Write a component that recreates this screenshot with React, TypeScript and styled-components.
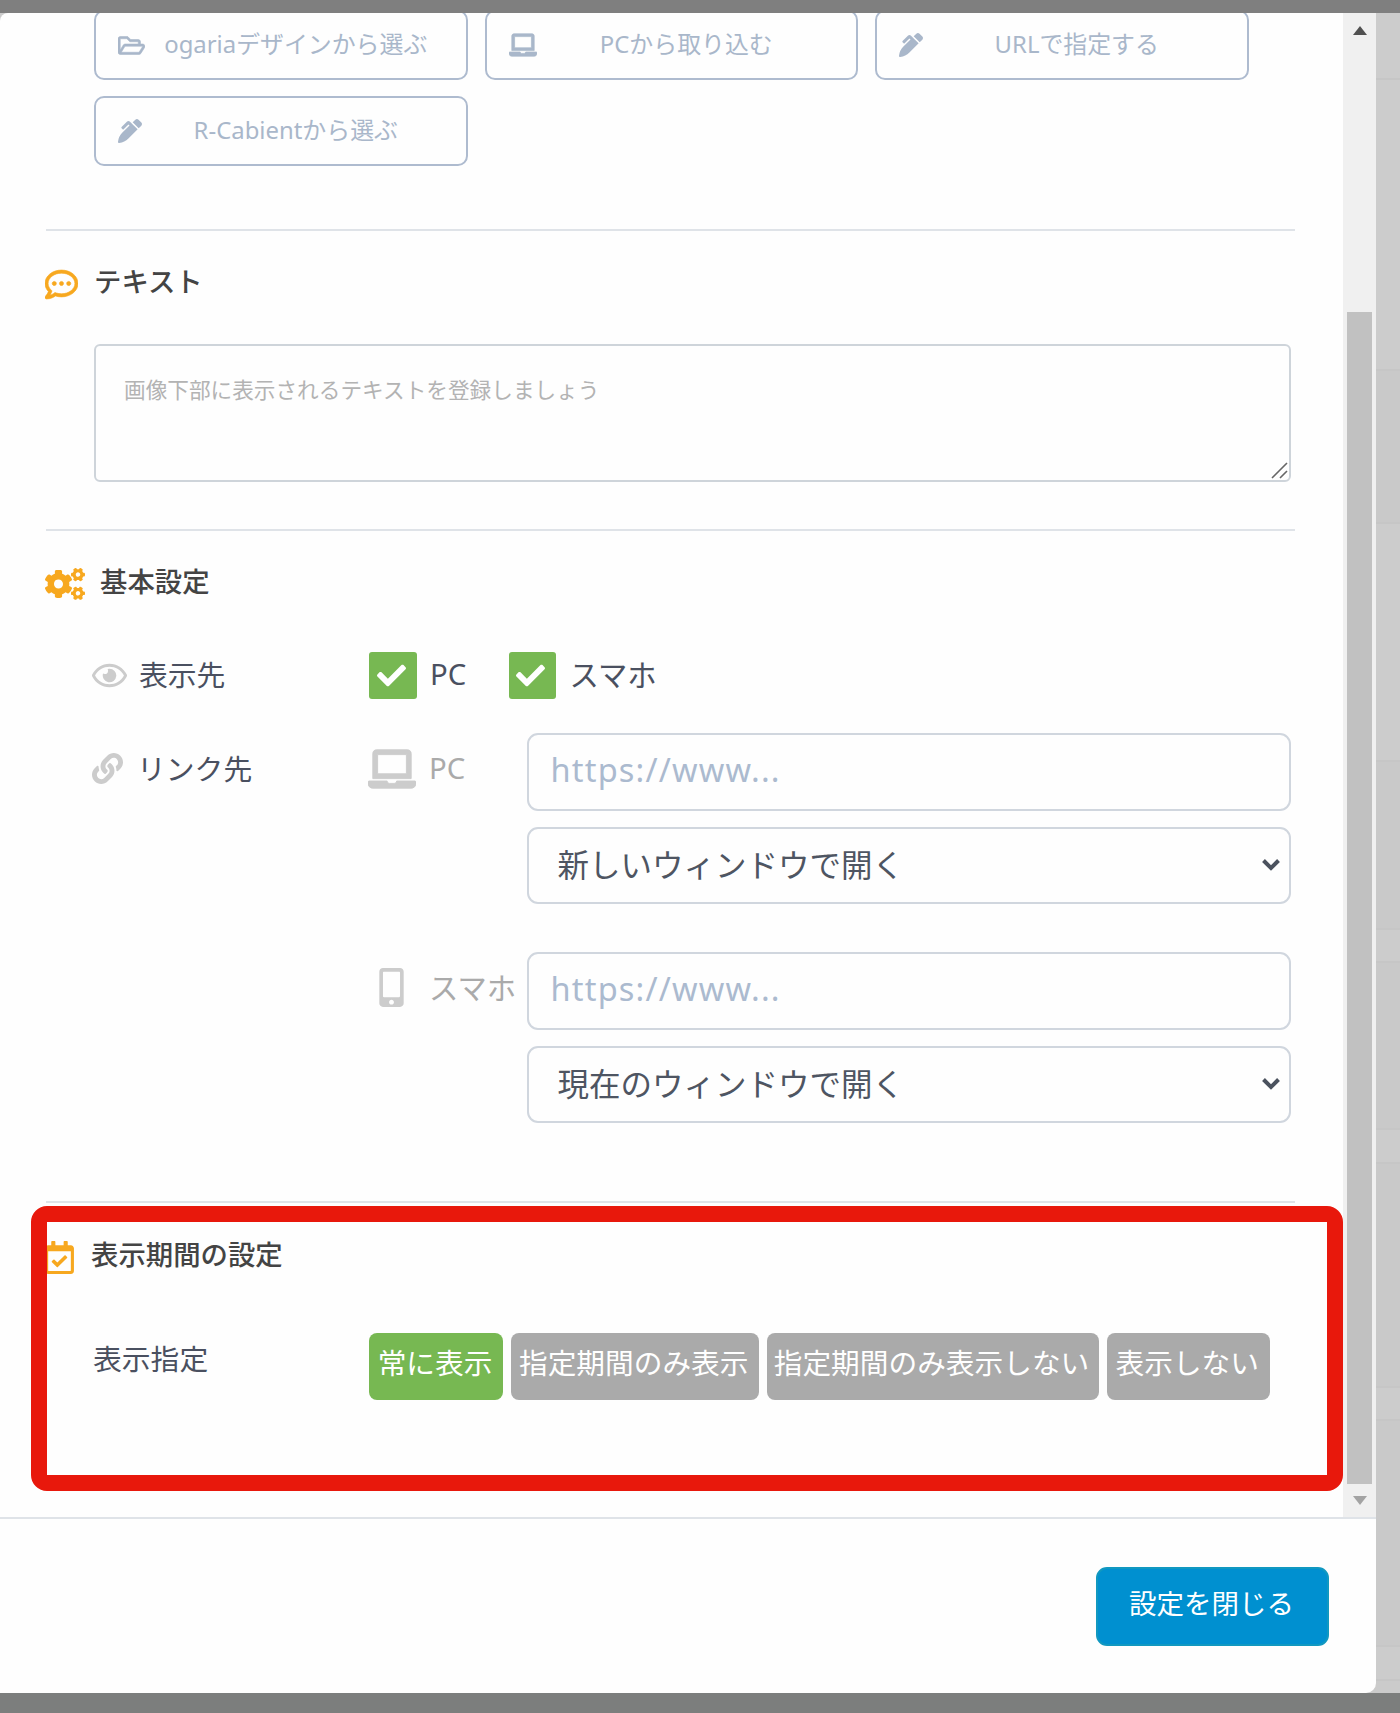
import React from 'react';
import styled, { createGlobalStyle } from 'styled-components';
import {
  FaRegFolderOpen, FaLaptop, FaPenAlt, FaRegCommentDots, FaCogs, FaRegEye, FaLink,
  FaMobileAlt, FaRegCalendarCheck, FaCheck,
} from 'react-icons/fa';

const Global = createGlobalStyle`
  * { box-sizing: border-box; }
  body { margin: 0; background: #cbcbcb; font-family: "Noto Sans", "Noto Sans CJK JP", sans-serif; color: #4a5060; }
  button, input, textarea, select { font-family: inherit; margin: 0; }
`;

const Page = styled.div`
  display: grid;
  grid-template-columns: 1376px 24px;
  grid-template-rows: 13px 1679.5px 20.5px;
  width: 1400px;
  height: 1713px;
  overflow: hidden;
`;
const Band = styled.div<{ $color: string }>`
  grid-column: 1 / -1;
  background: ${p => p.$color};
`;
const Backdrop = styled.div`
  background: #cbcbcb;
`;
const Strip = styled.div<{ $h: number; $alt?: boolean }>`
  height: ${p => p.$h}px;
  border-bottom: 2px solid #c6c6c6;
  background: ${p => (p.$alt ? '#c9c9c9' : '#cccccc')};
`;
const Modal = styled.div`
  display: flex;
  flex-direction: column;
  background: #fefefe;
  border-radius: 8px 0 10px 0;
  overflow: hidden;
`;
const Scroller = styled.div`
  display: flex;
  height: 1504px;
`;
const Content = styled.div`
  position: relative;
  width: 1343px;
  overflow: hidden;
`;
const Track = styled.div`
  width: 33px;
  background: #f0f0f0;
  display: flex;
  flex-direction: column;
  align-items: center;
`;
const ArrowUp = styled.div`
  margin-top: 13px;
  border: 7px solid transparent;
  border-top: 0;
  border-bottom: 9px solid #505050;
`;
const Thumb = styled.div`
  margin-top: 277px;
  width: 25px;
  height: 1172px;
  background: #c1c1c1;
`;
const ArrowDown = styled.div`
  margin-top: 12px;
  border: 7px solid transparent;
  border-bottom: 0;
  border-top: 9px solid #a3a3a3;
`;
const Sources = styled.div`
  display: grid;
  grid-template-columns: repeat(3, 373.5px);
  grid-auto-rows: 70px;
  gap: 16px 17px;
  margin: -3px 0 0 94px;
  height: 219px;
  align-content: start;
`;
const SourceButton = styled.button`
  display: flex;
  align-items: center;
  background: transparent;
  border: 2px solid #aebbcf;
  border-radius: 10px;
  padding: 0 22px;
  font-size: 23.9px;
  color: #a9b7ca;
  white-space: nowrap;
`;
const SourceIcon = styled.span<{ $size: number }>`
  display: flex;
  width: 32px;
  font-size: ${p => p.$size}px;
`;
const SourceLabel = styled.span`
  flex: 1;
  text-align: center;
  padding: 0 2px 6px 0;
`;
const Section = styled.section<{ $h: number }>`
  height: ${p => p.$h}px;
  margin-left: 46px;
  width: 1249px;
  border-top: 2px solid #dfe3e8;
`;
const Heading = styled.h2<{ $gap: number; $top: number; $left?: number }>`
  display: flex;
  align-items: center;
  gap: ${p => p.$gap}px;
  height: 40px;
  margin: ${p => p.$top}px 0 0 ${p => p.$left ?? 0}px;
  font-size: 27.4px;
  font-weight: 500;
  line-height: 40px;
  color: #444;
`;
const HeadingText = styled.span`
  padding-bottom: 4px;
  line-height: 36px;
  font-family: "Noto Sans CJK JP", sans-serif;
`;
const HeadingIcon = styled.span`
  display: flex;
  padding-top: 4px;
  color: #f7a81f;
`;
const TextArea = styled.div`
  position: relative;
  width: 1197px;
  margin: 42px 0 0 48px;
`;
const TextBox = styled.textarea`
  display: block;
  width: 1197px;
  height: 137.5px;
  border: 2px solid #ced4da;
  border-radius: 6px;
  padding: 26px 28px;
  font-size: 21.65px;
  line-height: 36px;
  background: transparent;
  resize: none;
  &::placeholder { color: #b3b3b3; }
`;
const Grip = styled.svg`
  position: absolute;
  right: 3px;
  bottom: 3px;
`;
const Row = styled.div<{ $h: number; $top: number }>`
  display: grid;
  grid-template-columns: 275px 1fr;
  margin: ${p => p.$top}px 0 0 48px;
  min-height: ${p => p.$h}px;
`;
const RowLabel = styled.div<{ $h: number }>`
  display: flex;
  align-items: center;
  height: ${p => p.$h}px;
  font-size: 28.8px;
  white-space: nowrap;
  svg { color: #ccc; }
`;
const LabelIcon = styled.span<{ $w: number }>`
  display: flex;
  width: ${p => p.$w}px;
  margin-left: -2px;
`;
const LabelText = styled.span<{ $up?: number }>`
  padding-bottom: ${p => p.$up ?? 4}px;
  margin-left: -1px;
`;
const Checks = styled.div`
  display: flex;
  align-items: center;
  height: 48px;
`;
const CheckItem = styled.label<{ $w: number }>`
  display: flex;
  align-items: center;
  gap: 14.5px;
  width: ${p => p.$w}px;
  font-size: 29.3px;
`;
const CheckBox = styled.span`
  display: flex;
  align-items: center;
  justify-content: center;
  width: 47.5px;
  height: 47.5px;
  padding-right: 3px;
  border-radius: 3px;
  background: #77b852;
  color: #fff;
  font-size: 29px;
`;
const Links = styled.div`
  display: flex;
  flex-direction: column;
  gap: 48px;
`;
const LinkRow = styled.div`
  display: grid;
  grid-template-columns: 157.5px 764.5px;
`;
const Device = styled.div`
  display: flex;
  align-items: center;
  height: 72px;
  font-size: 29.3px;
  color: #aaa;
  white-space: nowrap;
  svg { color: #ccc; }
`;
const DeviceIcon = styled.span`
  display: flex;
  justify-content: center;
  width: 49px;
  margin: 0 14px 0 -2px;
`;
const Fields = styled.div`
  display: flex;
  flex-direction: column;
  gap: 16px;
`;
const UrlInput = styled.input`
  height: 78.5px;
  border: 2px solid #d0d6de;
  border-radius: 11px;
  background: transparent;
  padding: 0 22px 4px;
  font-size: 32.5px;
  letter-spacing: 1.2px;
  &::placeholder { color: #abbacf; }
`;
const SelectBox = styled.button`
  display: flex;
  align-items: center;
  justify-content: space-between;
  height: 76.5px;
  border: 2px solid #d0d6de;
  border-radius: 11px;
  background: transparent;
  padding: 0 8px 0 29px;
  font-size: 31.5px;
  color: #4e5562;
`;
const SelectValue = styled.span`
  padding-bottom: 5px;
`;
const Periods = styled.div`
  display: flex;
  gap: 8px;
`;
const PeriodButton = styled.button<{ $w: number; $on?: boolean }>`
  width: ${p => p.$w}px;
  height: 67px;
  padding: 0 2px 11px 0;
  border: 0;
  border-radius: 8px;
  background: ${p => (p.$on ? '#77b852' : '#aaa')};
  color: #fff;
  font-size: 28.7px;
  white-space: nowrap;
`;
const Highlight = styled.div`
  position: absolute;
  left: 30.5px;
  top: 1193px;
  width: 1312.5px;
  height: 285px;
  border: 16px solid #e8180c;
  border-radius: 16px;
`;
const Footer = styled.footer`
  flex: 1;
  display: flex;
  justify-content: flex-end;
  align-items: flex-start;
  border-top: 2px solid #dfe3e8;
  padding: 48px 47px 0 0;
`;
const CloseButton = styled.button`
  width: 233px;
  height: 78.5px;
  padding: 0 2px 8px 0;
  border: 2px solid #1198c0;
  border-radius: 11px;
  background: #0090d0;
  color: #fff;
  font-size: 27.5px;
`;

const Chevron = () => (
  <svg width="20" height="14" viewBox="0 0 20 14" fill="none">
    <path d="M2.5 2.5L10 10L17.5 2.5" stroke="#4b525e" strokeWidth="4" />
  </svg>
);

const strips = [67, 291, 153, 238, 168, 33, 167, 34, 224, 33, 226, 34];

const sources = [
  { icon: <FaRegFolderOpen strokeWidth={12} stroke="currentColor" />, size: 27, label: 'ogariaデザインから選ぶ' },
  { icon: <FaLaptop strokeWidth={16} stroke="currentColor" />, size: 28, label: 'PCから取り込む' },
  { icon: <FaPenAlt />, size: 24, label: 'URLで指定する' },
  { icon: <FaPenAlt />, size: 24, label: 'R-Cabientから選ぶ' },
];

const links = [
  { icon: <FaLaptop size={48} strokeWidth={12} stroke="currentColor" />, name: 'PC', target: '新しいウィンドウで開く' },
  { icon: <FaMobileAlt size={39} />, name: 'スマホ', target: '現在のウィンドウで開く' },
];

const periods = [
  { label: '常に表示', w: 134, on: true },
  { label: '指定期間のみ表示', w: 247.5 },
  { label: '指定期間のみ表示しない', w: 332 },
  { label: '表示しない', w: 163.5 },
];

export default function App() {
  return (
    <>
      <Global />
      <Page>
        <Band $color="#7f7f7f" />
        <Modal>
          <Scroller>
            <Content>
              <Sources>
                {sources.map(s => (
                  <SourceButton key={s.label}>
                    <SourceIcon $size={s.size}>{s.icon}</SourceIcon>
                    <SourceLabel>{s.label}</SourceLabel>
                  </SourceButton>
                ))}
              </Sources>
              <Section $h={299.5}>
                <Heading $gap={16} $top={31} $left={-1}>
                  <HeadingIcon><FaRegCommentDots size={33} strokeWidth={10} stroke="currentColor" /></HeadingIcon>
                  <HeadingText>テキスト</HeadingText>
                </Heading>
                <TextArea>
                  <TextBox placeholder="画像下部に表示されるテキストを登録しましょう" />
                  <Grip width="17" height="17" viewBox="0 0 17 17" fill="none">
                    <path d="M1 16L16 1M9 16L16 9" stroke="#666" strokeWidth="1.6" />
                  </Grip>
                </TextArea>
              </Section>
              <Section $h={672.5}>
                <Heading $gap={15} $top={31} $left={-1}>
                  <HeadingIcon><FaCogs size={40} /></HeadingIcon>
                  <HeadingText>基本設定</HeadingText>
                </Heading>
                <Row $h={48} $top={50}>
                  <RowLabel $h={48}>
                    <LabelIcon $w={48}><FaRegEye size={35} /></LabelIcon>
                    <LabelText>表示先</LabelText>
                  </RowLabel>
                  <Checks>
                    <CheckItem $w={139.5}><CheckBox><FaCheck /></CheckBox><LabelText>PC</LabelText></CheckItem>
                    <CheckItem $w={160}><CheckBox><FaCheck /></CheckBox><LabelText>スマホ</LabelText></CheckItem>
                  </Checks>
                </Row>
                <Row $h={390} $top={33}>
                  <RowLabel $h={72}>
                    <LabelIcon $w={46}><FaLink size={31} /></LabelIcon>
                    <LabelText $up={3}>リンク先</LabelText>
                  </RowLabel>
                  <Links>
                    {links.map(l => (
                      <LinkRow key={l.name}>
                        <Device>
                          <DeviceIcon>{l.icon}</DeviceIcon>
                          <LabelText $up={2}>{l.name}</LabelText>
                        </Device>
                        <Fields>
                          <UrlInput placeholder="https://www..." />
                          <SelectBox><SelectValue>{l.target}</SelectValue><Chevron /></SelectBox>
                        </Fields>
                      </LinkRow>
                    ))}
                  </Links>
                </Row>
              </Section>
              <Section $h={310}>
                <Heading $gap={15} $top={32} $left={-3}>
                  <HeadingIcon><FaRegCalendarCheck size={33} /></HeadingIcon>
                  <HeadingText>表示期間の設定</HeadingText>
                </Heading>
                <Row $h={67} $top={58}>
                  <RowLabel $h={55}><LabelText $up={6}>表示指定</LabelText></RowLabel>
                  <Periods>
                    {periods.map(p => (
                      <PeriodButton key={p.label} $w={p.w} $on={p.on}>{p.label}</PeriodButton>
                    ))}
                  </Periods>
                </Row>
              </Section>
              <Highlight />
            </Content>
            <Track><ArrowUp /><Thumb /><ArrowDown /></Track>
          </Scroller>
          <Footer><CloseButton>設定を閉じる</CloseButton></Footer>
        </Modal>
        <Backdrop>
          {strips.map((h, i) => <Strip key={i} $h={h} $alt={[2, 4, 6, 8, 10].includes(i)} />)}
        </Backdrop>
        <Band $color="#7c7e7d" />
      </Page>
    </>
  );
}
